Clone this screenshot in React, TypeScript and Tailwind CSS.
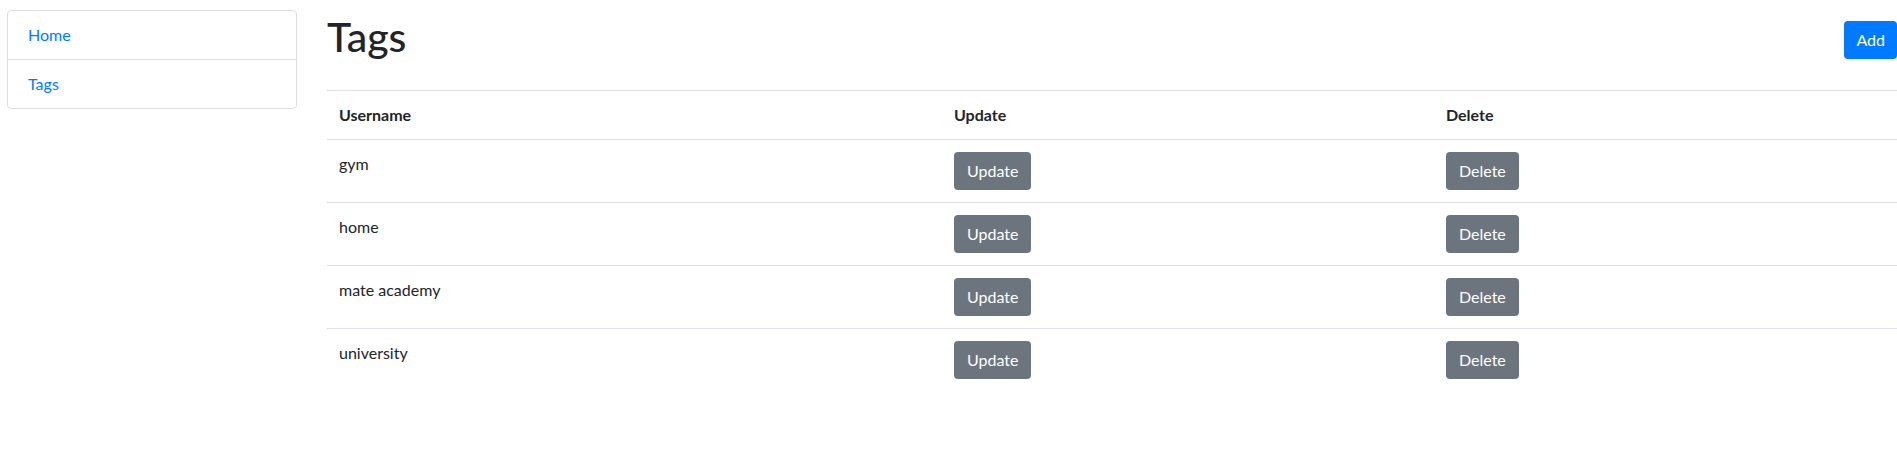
const tags = ["gym", "home", "mate academy", "university"];

function Sidebar() {
  return (
    <aside className="w-[290px] shrink-0 pt-[10px]">
      <ul className="rounded-[4px] border border-[#dfdfdf]">
        <li className="border-b border-[#dfdfdf] px-5 py-3 leading-6">
          <a href="#" className="text-[#007bff]">Home</a>
        </li>
        <li className="px-5 py-3 leading-6">
          <a href="#" className="text-[#007bff]">Tags</a>
        </li>
      </ul>
    </aside>
  );
}

function Btn({ children }: { children: string }) {
  return (
    <button className="h-[38px] rounded-[4px] bg-[#6c757d] px-[13px] text-base leading-6 text-white">
      {children}
    </button>
  );
}

export default function App() {
  return (
    <div
      className="flex min-h-screen bg-white pl-[7px] text-base text-[#212529]"
      style={{ fontFamily: "Lato, 'Liberation Sans', sans-serif" }}
    >
      <Sidebar />
      <main className="ml-[30px] flex-1">
        {/* Title row */}
        <div className="flex items-start justify-between pt-[13px]">
          <h1 className="text-[41px] font-medium leading-[48px]">Tags</h1>
          <button className="mt-[8px] h-[38px] rounded-[4px] bg-[#007bff] px-3 text-base leading-6 text-white">
            Add
          </button>
        </div>

        <table className="mt-[29px] w-full table-fixed border-collapse">
          <thead>
            <tr className="border-t border-b border-[#dee2e6] text-left">
              <th className="w-[615px] p-3 font-bold leading-6">Username</th>
              <th className="w-[492px] p-3 font-bold leading-6">Update</th>
              <th className="p-3 font-bold leading-6">Delete</th>
            </tr>
          </thead>
          <tbody>
            {tags.map((t, i) => (
              <tr key={t} className={i > 0 ? "border-t border-[#dee2e6]" : ""}>
                <td className="p-3 align-top leading-6">{t}</td>
                <td className="p-3 align-top">
                  <Btn>Update</Btn>
                </td>
                <td className="p-3 align-top">
                  <Btn>Delete</Btn>
                </td>
              </tr>
            ))}
          </tbody>
        </table>
      </main>
    </div>
  );
}
